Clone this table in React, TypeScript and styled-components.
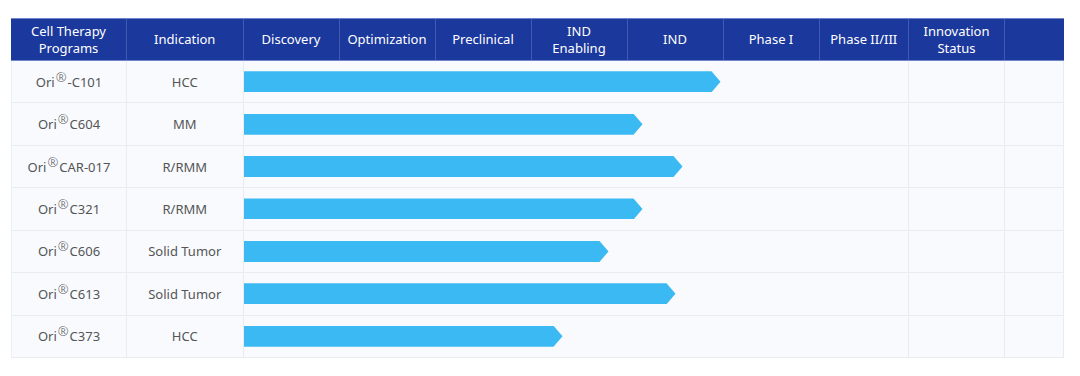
import React from "react"
import styled, { createGlobalStyle } from "styled-components"

const GlobalStyle = createGlobalStyle`
  html, body {
    margin: 0;
    padding: 0;
    background: #fff;
  }
  body {
    font-family: "Noto Sans", "Open Sans", Arial, sans-serif;
  }
`

const COLS = "116px 116.5px 96px 96px 96px 96px 96px 96px 89.5px 96px 58.5px"
// body rows carry a 1px left border, so the first column is 1px narrower
const BODY_COLS = "115px 116.5px 665.5px 96px 58.5px"

interface Program {
  code: string
  dash?: boolean
  indication: string
  reach: number
}

const programs: Program[] = [
  { code: "C101", dash: true, indication: "HCC", reach: 477 },
  { code: "C604", indication: "MM", reach: 399 },
  { code: "CAR-017", indication: "R/RMM", reach: 439 },
  { code: "C321", indication: "R/RMM", reach: 399 },
  { code: "C606", indication: "Solid Tumor", reach: 365 },
  { code: "C613", indication: "Solid Tumor", reach: 432 },
  { code: "C373", indication: "HCC", reach: 319 },
]

const headers = [
  ["Cell Therapy", "Programs"],
  ["Indication"],
  ["Discovery"],
  ["Optimization"],
  ["Preclinical"],
  ["IND", "Enabling"],
  ["IND"],
  ["Phase I"],
  ["Phase II/III"],
  ["Innovation", "Status"],
  [],
]

const Page = styled.div`
  padding: 18px 16px 18px 11px;
`

const Table = styled.div`
  width: 1053px;
`

const HeadRow = styled.div`
  display: grid;
  grid-template-columns: ${COLS};
  height: 43px;
  box-sizing: border-box;
  background: #1b389d;
  border-top: 1px solid #6f84cb;
  border-bottom: 1px solid #6f84cb;
`

const HeadCell = styled.div`
  display: flex;
  flex-direction: column;
  align-items: center;
  justify-content: center;
  color: #fff;
  font-size: 13px;
  line-height: 17px;
  text-align: center;
  border-right: 1px solid #4259b0;

  &:last-child {
    border-right: none;
  }
`

const Row = styled.div`
  display: grid;
  grid-template-columns: ${BODY_COLS};
  height: 42.43px;
  box-sizing: border-box;
  background: #f8fafe;
  border-bottom: 1px solid #e9ecf1;
  border-left: 1px solid #eceff3;
`

const Cell = styled.div`
  display: flex;
  align-items: center;
  justify-content: center;
  color: #555;
  font-size: 13px;
  border-right: 1px solid #e9ecf1;
`

const Track = styled.div`
  display: flex;
  align-items: center;
  border-right: 1px solid #e9ecf1;
`

const Bar = styled.div`
  height: 21px;
  background: #3bb9f2;
  clip-path: polygon(0 0, calc(100% - 9px) 0, 100% 50%, calc(100% - 9px) 100%, 0 100%);
`

const Reg = styled.span`
  position: relative;
  top: -5px;
  font-size: 13px;
  font-weight: 300;
  margin: 0 1px;
`

const App: React.FC = () => (
  <Page>
    <GlobalStyle />
    <Table>
      <HeadRow>
        {headers.map((lines, i) => (
          <HeadCell key={i}>
            {lines.map((l) => (
              <span key={l}>{l}</span>
            ))}
          </HeadCell>
        ))}
      </HeadRow>
      {programs.map((p) => (
        <Row key={p.code}>
          <Cell>
            Ori<Reg>®</Reg>
            {p.dash ? "-" : ""}
            {p.code}
          </Cell>
          <Cell>{p.indication}</Cell>
          <Track>
            <Bar style={{ width: p.reach }} />
          </Track>
          <Cell />
          <Cell />
        </Row>
      ))}
    </Table>
  </Page>
)

export default App
